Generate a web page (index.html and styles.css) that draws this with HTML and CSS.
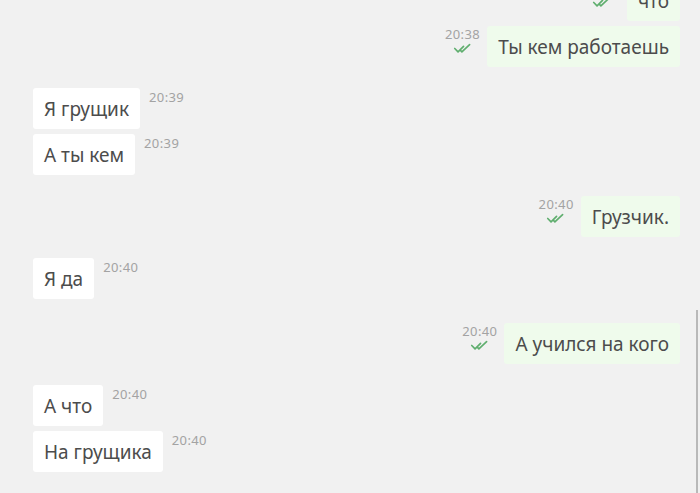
FILE: index.html
```html
<!DOCTYPE html>
<html lang="ru">
<head>
<meta charset="utf-8">
<title>Чат</title>
<link rel="stylesheet" href="styles.css">
</head>
<body>
<div class="chat">
  <div class="scrollbar"></div>
  <div class="list">
    <div class="row out first">
      <div class="meta"><span class="time">20:38</span><svg class="check" viewBox="0 0 18 10"><path d="M1.5 5 L4.5 8 L9.5 3 M6.5 6.5 L8 8 L15 1.5"/></svg></div>
      <div class="bubble">что</div>
    </div>
    <div class="row out">
      <div class="meta"><span class="time">20:38</span><svg class="check" viewBox="0 0 18 10"><path d="M1.5 5 L4.5 8 L9.5 3 M6.5 6.5 L8 8 L15 1.5"/></svg></div>
      <div class="bubble">Ты кем работаешь</div>
    </div>

    <div class="row in gap">
      <div class="bubble">Я грущик</div>
      <div class="meta"><span class="time">20:39</span></div>
    </div>
    <div class="row in">
      <div class="bubble">А ты кем</div>
      <div class="meta"><span class="time">20:39</span></div>
    </div>

    <div class="row out gap">
      <div class="meta"><span class="time">20:40</span><svg class="check" viewBox="0 0 18 10"><path d="M1.5 5 L4.5 8 L9.5 3 M6.5 6.5 L8 8 L15 1.5"/></svg></div>
      <div class="bubble">Грузчик.</div>
    </div>

    <div class="row in gap">
      <div class="bubble">Я да</div>
      <div class="meta"><span class="time">20:40</span></div>
    </div>

    <div class="row out gap2">
      <div class="meta"><span class="time">20:40</span><svg class="check" viewBox="0 0 18 10"><path d="M1.5 5 L4.5 8 L9.5 3 M6.5 6.5 L8 8 L15 1.5"/></svg></div>
      <div class="bubble">А учился на кого</div>
    </div>

    <div class="row in gap">
      <div class="bubble">А что</div>
      <div class="meta"><span class="time">20:40</span></div>
    </div>
    <div class="row in">
      <div class="bubble">На грущика</div>
      <div class="meta"><span class="time">20:40</span></div>
    </div>
  </div>
</div>
</body>
</html>
```

FILE: styles.css
```css
html, body {
  margin: 0;
  padding: 0;
  width: 700px;
  height: 493px;
  overflow: hidden;
  background: #f1f1f1;
}

.chat {
  position: relative;
  width: 700px;
  height: 493px;
  overflow: hidden;
  background: #f1f1f1;
  font-family: "Noto Sans", "Open Sans", sans-serif;
}

.scrollbar {
  position: absolute;
  left: 696px;
  top: 310px;
  width: 2px;
  height: 200px;
  background: #b9b9b9;
}

.list {
  display: flex;
  flex-direction: column;
  padding: 0 20px 0 33px;
}

.row {
  display: flex;
  align-items: flex-start;
  margin-top: 5px;
}

.row.first {
  margin-top: -20px;
}

.row.gap {
  margin-top: 21px;
}

.row.gap2 {
  margin-top: 24px;
}

.row.out {
  justify-content: flex-end;
}

.row.in {
  justify-content: flex-start;
}

.bubble {
  font-size: 19px;
  line-height: 22px;
  color: #4c4c4c;
  padding: 10px 11px 9px 11px;
  border-radius: 3px;
}

.row.in .bubble {
  background: #ffffff;
}

.row.out .bubble {
  background: #effbec;
}

.meta {
  display: flex;
  flex-direction: column;
  align-items: center;
}

.row.in .meta {
  margin-left: 9px;
  padding-top: 2px;
}

.row.out .meta {
  margin-right: 7px;
  padding-top: 1px;
}

.time {
  font-size: 13px;
  line-height: 14px;
  color: #a3a3a3;
  letter-spacing: 0.4px;
}

.check {
  width: 20px;
  height: 11px;
  margin-top: 2px;
  fill: none;
  stroke: #5fae6e;
  stroke-width: 1.5;
  stroke-linecap: round;
  stroke-linejoin: round;
}
```
